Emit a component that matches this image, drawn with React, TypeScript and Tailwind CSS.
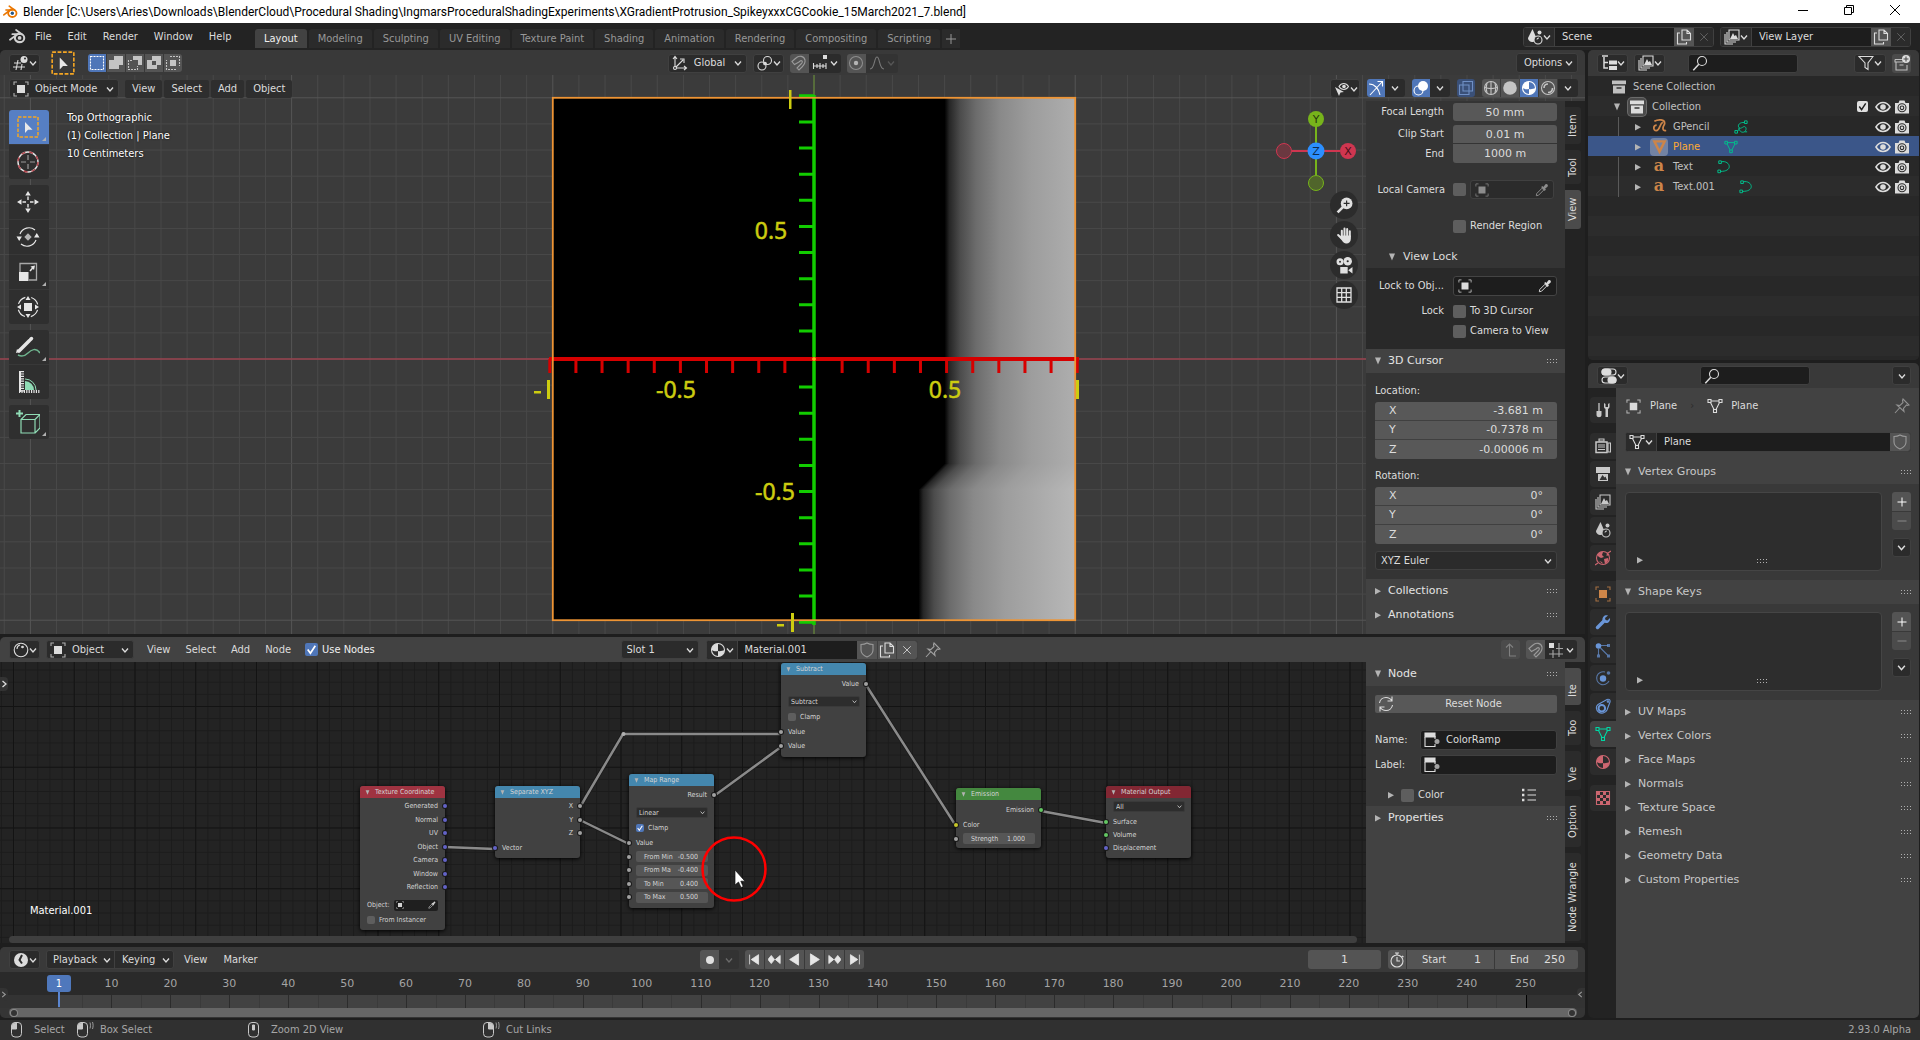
import type { ReactNode } from "react";

/* ---------- icons ---------- */

interface IconProps {
  className?: string;
}

function Svg({ className = "size-4", children }: IconProps & { children: ReactNode }) {
  return (
    <svg
      viewBox="0 0 16 16"
      className={`shrink-0 ${className}`}
      fill="none"
      stroke="currentColor"
      strokeWidth="1.1"
      aria-hidden="true"
    >
      {children}
    </svg>
  );
}

const Chevron = ({ className = "size-2" }: IconProps) => (
  <svg viewBox="0 0 8 8" className={`shrink-0 ${className}`} fill="none" stroke="currentColor" strokeWidth="1.3" aria-hidden="true">
    <path d="M1 2.5 4 6l3-3.500" />
  </svg>
);

const Triangle = ({ open = false, className = "size-2" }: IconProps & { open?: boolean }) => (
  <svg viewBox="0 0 8 8" className={`shrink-0 text-[#b4b4b4] ${className}`} fill="currentColor" aria-hidden="true">
    <path d={open ? "M1 .5h6L4 7.500z" : "M1 1v6.500L7 4.200z"} />
  </svg>
);

const Grip = ({ className = "" }: IconProps) => (
  <svg viewBox="0 0 12 5" className={`h-[5px] w-3 shrink-0 ${className}`} fill="#b0b0b0" aria-hidden="true">
    <path d="M0 0h1v1H0zM3 0h1v1H3zM6 0h1v1H6zM9 0h1v1H9zM0 3h1v1H0zM3 3h1v1H3zM6 3h1v1H6zM9 3h1v1H9z" />
  </svg>
);

const BlenderLogo = ({ className, ring, core }: IconProps & { ring: string; core: string }) => (
  <svg viewBox="0 0 18 16" className={`shrink-0 ${className}`} fill="none" aria-hidden="true">
    <path d="M1 11.500 9.500 5M3.500 5.500H11M7.500 1l6.500 4.800" stroke={ring} strokeWidth="1.900" strokeLinecap="round" />
    <ellipse cx="11.200" cy="9.500" rx="5" ry="4.500" stroke={ring} strokeWidth="2.200" />
    <circle cx="11.200" cy="9.500" r="2" fill={core} />
  </svg>
);

const ViewportIcon = () => (
  <Svg>
    <path d="M1 8h7M0 12h12M5 5 3 15M9 9l-1 6" />
    <circle cx="11" cy="4.500" r="3.500" fill="currentColor" stroke="none" />
    <circle cx="12" cy="3.500" r="1" fill="#2b2b2b" stroke="none" />
  </Svg>
);

const SelectBoxIcon = ({ className }: IconProps) => (
  <svg viewBox="0 0 24 24" className={`shrink-0 ${className}`} fill="none" aria-hidden="true">
    <rect x="2" y="2" width="20" height="20" stroke="#f5a623" strokeWidth="1.500" strokeDasharray="3.500 1.500" />
    <path d="M9 7v11l3-3.300h4.500z" fill="#e8e8e8" />
  </svg>
);

const CursorToolIcon = ({ className }: IconProps) => (
  <svg viewBox="0 0 24 24" className={className} fill="none" aria-hidden="true">
    <circle cx="12" cy="12" r="10" stroke="#e6e6e6" strokeWidth="1.400" />
    <circle cx="12" cy="12" r="10" stroke="#b5474f" strokeWidth="1.500" strokeDasharray="4 4" />
    <path d="M12 5v5M12 14v5M5 12h5M14 12h5" stroke="#9a9a9a" strokeWidth="1.200" />
  </svg>
);

const MoveIcon = ({ className }: IconProps) => (
  <svg viewBox="0 0 24 24" className={className} aria-hidden="true">
    <path d="m12 1 2.800 4.500H9.200zM12 23l2.800-4.500H9.200zM1 12l4.500-2.800v5.600zM23 12l-4.500-2.800v5.600z" fill="#e6e6e6" />
    <path d="M12 6.500V10M12 14v3.500M6.500 12H10M14 12h3.500" stroke="#e6e6e6" strokeWidth="1.400" />
  </svg>
);

const RotateIcon = ({ className }: IconProps) => (
  <svg viewBox="0 0 24 24" className={className} fill="none" aria-hidden="true">
    <path d="M4 9a9.500 9.500 0 0 1 15-4M20 15a9.500 9.500 0 0 1-15 4" stroke="#e6e6e6" strokeWidth="1.200" />
    <path d="m18 12.500 2.800-4.500 2.700 4.500zM.5 11.500h5.400L3.200 16z" fill="#e6e6e6" />
    <path d="m12 8.300 3.700 3.700-3.700 3.700L8.300 12z" fill="#b5b5b5" />
  </svg>
);

const ScaleIcon = ({ className }: IconProps) => (
  <svg viewBox="0 0 24 24" className={className} fill="none" aria-hidden="true">
    <path d="M4 12V3.500h16.500V20H13" stroke="#a8a8a8" strokeWidth="1.300" />
    <path d="M3 12h9.500v9H3z" fill="#e6e6e6" />
    <path d="m14 11 3.500-4" stroke="#e6e6e6" strokeWidth="1.500" />
    <path d="M19 5.500 14.500 6.500l3.500 3.500z" fill="#e6e6e6" />
  </svg>
);

const TransformIcon = ({ className }: IconProps) => (
  <svg viewBox="0 0 24 24" className={className} fill="none" aria-hidden="true">
    <circle cx="12" cy="12" r="10" stroke="#e6e6e6" strokeWidth="1.200" strokeDasharray="9.700 6" strokeDashoffset="-3" />
    <path d="M8 8h8v8H8z" fill="#e6e6e6" />
    <path d="m12 1 2.500 4h-5zM12 23l2.500-4h-5zM1 12l4-2.500v5zM23 12l-4-2.500v5z" fill="#e6e6e6" />
  </svg>
);

const AnnotateIcon = ({ className }: IconProps) => (
  <svg viewBox="0 0 24 24" className={className} fill="none" aria-hidden="true">
    <path d="M3 16 13.500 5.500M14.500 4.500l1-1" stroke="#e6e6e6" strokeWidth="3.500" strokeLinecap="round" />
    <path d="m0 18 1-4 3 3z" fill="#e6e6e6" />
    <path d="M2 20c4 2 7 1 10-2s8-6 12 0" stroke="#6fb58f" strokeWidth="1.400" />
  </svg>
);

const MeasureIcon = ({ className }: IconProps) => (
  <svg viewBox="0 0 24 24" className={className} fill="none" aria-hidden="true">
    <path d="M9 11a9 9 0 0 1 9 9H9z" fill="#8fdcb5" />
    <path d="M9 9a11 11 0 0 1 11 11" stroke="#8fdcb5" />
    <path d="M4 1v21" stroke="#e6e6e6" strokeWidth="2" />
    <path d="M6.500 1v21" stroke="#e6e6e6" strokeWidth="3" strokeDasharray="1.200 1.200" />
    <path d="M3 21.500h21" stroke="#e6e6e6" strokeWidth="3" strokeDasharray="1.200 1.200" />
  </svg>
);

const AddCubeIcon = ({ className }: IconProps) => (
  <svg viewBox="0 0 24 24" className={className} fill="none" aria-hidden="true">
    <path d="M3.500 0v7M0 3.500h7" stroke="#8fdcb5" strokeWidth="2" />
    <path d="M5 9.500h14V23H5zM5 9.500l5-5h14l-5 5M24 4.500V18l-5 5" stroke="#8fdcb5" strokeWidth="1.200" />
  </svg>
);

const ObjectIcon = ({ className }: IconProps) => (
  <Svg className={className}>
    <path d="M1 4V1h3M12 1h3v3M15 12v3h-3M4 15H1v-3" opacity=".75" />
    <path d="M4 4h8v8H4z" fill="currentColor" stroke="none" />
  </Svg>
);

const AxesIcon = () => (
  <Svg>
    <path d="M3 12V2M1 4l2-2.500L5 4M4 13h10M12 11l2.500 2L12 15M4 12l7-7M8 4h4v4" />
    <circle cx="3" cy="13" r="1.500" />
  </Svg>
);

const PivotIcon = () => (
  <Svg>
    <circle cx="10.500" cy="5.500" r="4" />
    <circle cx="5" cy="11" r="4" />
    <circle cx="8" cy="8.500" r="1.300" fill="currentColor" />
  </Svg>
);

const MagnetIcon = () => (
  <Svg>
    <path d="M1 6.500 5 3c3-3 8-2 9 2 .5 3-1 5-3 7l-3 3-2-2 4-4c1-1 2-2 1-3s-2 0-3 1L3.500 9.500z" />
  </Svg>
);

const SnapIncrementIcon = () => (
  <Svg>
    <path d="M1 11h13M1.500 8v6M5 9v4M8 8v6M11 9v4M14 8v6" />
    <path d="M11 0h4v4h-4z" fill="currentColor" stroke="none" />
  </Svg>
);

const CircleDotIcon = () => (
  <Svg>
    <circle cx="8" cy="8" r="6.500" opacity=".6" />
    <circle cx="8" cy="8" r="2.200" fill="currentColor" stroke="none" />
  </Svg>
);

const FalloffIcon = () => (
  <Svg>
    <path d="M1 14c5 0 4-12 7-12s2 12 7 12" />
  </Svg>
);

const SceneIcon = ({ className }: IconProps) => (
  <Svg className={className}>
    <path d="M5.500 0 9 8c0 3-1.500 5-3.500 5S1 11.500 1 9z" fill="currentColor" stroke="none" />
    <circle cx="12.500" cy="3.500" r="2" fill="currentColor" stroke="none" />
    <circle cx="11" cy="11" r="4" fill="#2b2b2b" />
    <path d="M10 10.500c0-1 1-1.500 2-1.500" />
  </Svg>
);

const LayersIcon = ({ className }: IconProps) => (
  <Svg className={className}>
    <path d="M5 1h10v10H5zM3 3v10h9M1 5v10h8" />
    <path d="m6 10 3-6 1.500 3L12 6l2 4z" fill="currentColor" stroke="none" />
  </Svg>
);

const CopyIcon = () => (
  <Svg>
    <path d="M6 1h5l3.500 3.500V11H6zM11 1v3.500h3.500M4 4H1.500v11h9v-2" />
  </Svg>
);

const CloseIcon = ({ className }: IconProps) => (
  <Svg className={className}>
    <path d="m3 3 10 10M13 3 3 13" />
  </Svg>
);

const PinIcon = () => (
  <Svg>
    <path d="m1 15 4.500-5M9 1l6 6-1.500.5-1-.5-3 3.500 .5 3L3 7l3 .5L9 4.500 8.500 2.500z" />
  </Svg>
);

const ShieldIcon = () => (
  <Svg>
    <path d="M8 1c2 1.200 4 1.500 6 1.500V8c0 3-2.500 5.500-6 7-3.500-1.500-6-4-6-7V2.500C4 2.500 6 2.200 8 1z" />
  </Svg>
);

const SearchIcon = () => (
  <Svg>
    <circle cx="10" cy="6" r="4.500" />
    <path d="m6.800 9.300-5.500 6" strokeWidth="1.500" />
  </Svg>
);

const FilterIcon = () => (
  <Svg>
    <path d="M1 1.500h14L10 8v6.500l-3-2V8z" />
  </Svg>
);

const NewCollectionIcon = () => (
  <Svg>
    <path d="M1 4.500h9M2 7v8h11v-5M1 4.500V7h8M5.500 10h4" opacity=".8" />
    <circle cx="12" cy="4" r="4" fill="currentColor" stroke="none" />
    <path d="M12 1.500v5M9.500 4h5" stroke="#4b4b4b" />
  </Svg>
);

const OutlinerIcon = () => (
  <Svg>
    <path d="M1 1h6M3 2v11h4M3 7.500h4" strokeWidth="1.500" />
    <path d="M8 5.500h8v4H8zM8 11h8v4H8z" fill="currentColor" stroke="none" />
  </Svg>
);

const PropertiesIcon = () => (
  <Svg>
    <rect x="1" y="1" width="14" height="6" rx="3" />
    <rect x="1" y="9" width="14" height="6" rx="3" />
    <rect x="1" y="1" width="9" height="6" rx="3" fill="currentColor" />
    <rect x="7" y="9" width="8" height="6" rx="3" fill="currentColor" />
  </Svg>
);

const EyeIcon = () => (
  <Svg>
    <path d="M1 8c3.500-6 10.500-6 14 0-3.500 6-10.500 6-14 0z" strokeWidth="1.600" />
    <circle cx="8" cy="8" r="2.800" fill="currentColor" stroke="none" />
  </Svg>
);

const CameraIcon = () => (
  <Svg>
    <path d="M1 4h3.500l1-2.500h5l1 2.500H15v10.500H1z" fill="currentColor" stroke="none" />
    <circle cx="8" cy="8.800" r="4" stroke="#2b2b2b" />
    <circle cx="8" cy="8.800" r="1.800" stroke="#2b2b2b" />
  </Svg>
);

const CollectionIcon = ({ className }: IconProps) => (
  <Svg className={className}>
    <path d="M1 1.500h14v3.800H1zM2 6.500h12V14.500H2z" fill="currentColor" stroke="none" />
    <path d="M5.500 9h5" stroke="#333" strokeWidth="1.700" />
  </Svg>
);

const MeshDataIcon = ({ className }: IconProps) => (
  <Svg className={className}>
    <path d="M1 1.500h3v3H1zM12 1.500h3v3h-3zM6.500 11.500h3v3h-3zM4 3h8M3.500 4.500l3.500 7M12.500 4.500 9 11.500" />
  </Svg>
);

const CurveDataIcon = ({ className }: IconProps) => (
  <Svg className={className}>
    <path d="M5 2c5-1 9 2 9 5.500S10 13 4.500 13M2 1h3v3H2zM1 11.500h3v3H1z" />
  </Svg>
);

const GPencilDataIcon = ({ className }: IconProps) => (
  <Svg className={className}>
    <path d="M12 1h3v3h-3zM1 12h3v3H1zM12 3C7 2 3 6 6 9c2 2 5-3 7-1 2 2 0 6-3 6s-5-4-4-5M4 13c1-1 2-3 2-4M12 13.500h3" />
  </Svg>
);

const GPencilIcon = ({ className }: IconProps) => (
  <Svg className={className}>
    <path d="M2.500 3.500C7 1 13.500 1.500 13.500 5.500c0 2-1.800 3-1.800 5.500 0 2 1.500 3 3.300 2M11.500 4.500C8 6 8.500 13.500 4.500 13.500 1 13.500 1 7.500 5 7.500" strokeWidth="1.900" />
  </Svg>
);

const MeshObjectIcon = ({ className }: IconProps) => (
  <Svg className={className}>
    <path d="M2.500 2.500h11L8 13.500z" strokeWidth="2.600" />
  </Svg>
);

const ToolIcon = () => (
  <Svg>
    <path d="M4 1v8" strokeWidth="1.300" />
    <path d="M1.500 9h5v4c0 3-5 3-5 0zM9 1v4c0 1 1.500 2 1.500 2v8h2.500V7s1.500-1 1.500-2V1L13 2v3h-2.500V2z" fill="currentColor" stroke="none" />
  </Svg>
);

const RenderIcon = () => (
  <Svg>
    <path d="M1 4h11v10.500H1z" strokeWidth="1.500" />
    <path d="M4 1h5v2H4zM13 5h2.500v9H13zM3 7h7M3 9h7M3 11.500h7" />
  </Svg>
);

const OutputIcon = () => (
  <Svg>
    <path d="M1 1h14v6H1zM3 8h10v7H3z" fill="currentColor" stroke="none" />
    <path d="m4.500 14 3-5 2 2.500 1-1 1.500 3.500z" fill="#333" stroke="none" />
  </Svg>
);

const WorldIcon = () => (
  <Svg>
    <circle cx="8" cy="8" r="6.500" />
    <path d="M2 5c2-3 5-3.500 6-3l-1 3 2 2-3 1-2-1zM9 9l4-1c1 2-1 5-3 6zM12 2l2.500 3-3 1zM4 11l3 1 1 2z" fill="currentColor" stroke="none" />
    <path d="m0 15 3-2M13 3l3-2" />
  </Svg>
);

const WrenchIcon = () => (
  <Svg>
    <path d="M2.500 13.500 9 7" strokeWidth="3.500" strokeLinecap="round" />
    <path d="M13 1.500c-3-1-6 1-5.500 5l3 2.500c3 .5 5-2 4.500-5l-2.500 2.500-2-.5-.5-2z" fill="currentColor" stroke="none" />
  </Svg>
);

const ParticlesIcon = () => (
  <Svg>
    <circle cx="3.500" cy="4" r="2.800" fill="currentColor" stroke="none" />
    <path d="M6 3.500h7M3.500 7v6M5.500 6l7 7" opacity=".7" />
    <path d="M12 2h3v3h-3zM2 12.500h3v3H2zM12 12.500h3v3h-3z" fill="currentColor" stroke="none" opacity=".7" />
  </Svg>
);

const PhysicsIcon = () => (
  <Svg>
    <path d="M10 2a6.500 6.500 0 1 0 4 9" opacity=".7" />
    <circle cx="8" cy="8.500" r="3.200" fill="currentColor" stroke="none" />
    <circle cx="13.500" cy="3" r="1.800" fill="currentColor" stroke="none" opacity=".7" />
  </Svg>
);

const ConstraintIcon = () => (
  <Svg>
    <path d="M3 6.500 12 1.500c2-.8 3.500.5 3 2.500l-3 8c-1.500 3.500-6 4-8.500 2S.5 8.500 3 6.500z" />
    <circle cx="6.800" cy="10.200" r="3.300" strokeWidth="2" />
    <circle cx="13" cy="3.500" r=".8" />
  </Svg>
);

const MaterialIcon = ({ className }: IconProps) => (
  <Svg className={className}>
    <circle cx="8" cy="8" r="6.500" />
    <path d="M8 1.500A6.500 6.500 0 0 0 1.500 8c2.500 1.500 4.500 1.500 6.500 1zM8 9c2 .5 4.500 0 6.500-1A6.500 6.500 0 0 1 8 14.500z" fill="currentColor" stroke="none" />
  </Svg>
);

const TextureIcon = () => (
  <Svg>
    <path d="M1.500 1.500h13v13h-13z" />
    <path
      d="M2 2h3v3H2zM8 2h3v3H8zM5 5h3v3H5zM11 5h3v3h-3zM2 8h3v3H2zM8 8h3v3H8zM5 11h3v3H5zM11 11h3v3h-3z"
      fill="currentColor"
      stroke="none"
    />
  </Svg>
);

const EyedropperIcon = ({ className }: IconProps) => (
  <Svg className={className}>
    <path d="M1.500 14.500 2 12l6-6 2 2-6 6z" />
    <path d="M7 4.500 8.500 3.500 9.500 4.500l2.500-3c1.500-1 3.500 1 2.500 2.500l-3 2.500 1 1L11 9z" fill="currentColor" stroke="none" />
  </Svg>
);

const ShaderIcon = () => (
  <Svg>
    <circle cx="8" cy="8" r="6.800" />
    <path d="M4 7c0-2 1-3.500 3-4" />
    <circle cx="9.500" cy="5" r=".8" fill="currentColor" />
  </Svg>
);

const NodeIcon = () => (
  <Svg>
    <path d="M1 1h10v4H1z" fill="currentColor" />
    <path d="M11 4v3M1 5v9.500h10V12" />
    <circle cx="13" cy="9.500" r="2.500" fill="currentColor" stroke="none" opacity=".7" />
  </Svg>
);

const RefreshIcon = () => (
  <Svg>
    <path d="M1.500 7C2 3.500 5 1.500 8 1.500c2.500 0 4.500 1 6 3.500M14 .5V5H9.500M14.500 9c-.5 3.500-3.500 5.500-6.500 5.500-2.500 0-4.500-1-6-3.500M2 15.500V11h4.500" />
  </Svg>
);

const ListIcon = () => (
  <Svg>
    <path d="M6.500 3H15M6.500 8H15M6.500 13H15" />
    <path d="M1 1.800h2.400v2.400H1zM1 6.800h2.400v2.400H1zM1 11.800h2.400v2.400H1z" fill="currentColor" stroke="none" />
  </Svg>
);

const ClockIcon = () => (
  <Svg>
    <circle cx="8" cy="8" r="7" fill="currentColor" stroke="none" />
    <path d="M9 3 6.500 8 9 11.500" stroke="#2b2b2b" strokeWidth="2" />
  </Svg>
);

const StopwatchIcon = () => (
  <Svg>
    <circle cx="8" cy="9" r="6" />
    <path d="M8 5v4h3M6 1h4M8 1v2M13 4l1.500 1" />
  </Svg>
);

const MouseIcon = ({ side, drag = false }: { side: "left" | "middle" | "right"; drag?: boolean }) => (
  <svg viewBox="0 0 18 18" className="size-[18px] shrink-0" fill="none" stroke="#c8c8c8" aria-hidden="true">
    <rect x="1.500" y="1.500" width="10" height="14.500" rx="3.500" />
    {side === "left" && <path d="M2 8V5c0-2 1.500-3 4.500-3v6z" fill="#c8c8c8" />}
    {side === "middle" && <path d="M5.500 4h2v5h-2z" fill="#c8c8c8" />}
    {side === "right" && <path d="M11 8V5c0-2-1.500-3-4.500-3v6z" fill="#c8c8c8" />}
    {drag && <path d="M14 1.500c.6 2 .6 4 0 6M16.500 1c.8 2.500.8 4.500 0 7" opacity=".7" />}
  </svg>
);

/* ---------- shared controls ---------- */

const dark = "rounded-[3px] border border-[#404040] bg-[#2b2b2b]";

function IconMenu({ label, children, className = "w-[31px]" }: { label: string; children: ReactNode; className?: string }) {
  return (
    <button type="button" aria-label={label} className={`flex h-[19px] items-center justify-between px-[3px] ${dark} ${className}`}>
      {children}
      <Chevron />
    </button>
  );
}

function Dropdown({ label, value, className, small = false }: { label: string; value: string; className: string; small?: boolean }) {
  return (
    <span className={`relative flex items-center ${className}`}>
      <select aria-label={label} className="h-full w-full appearance-none bg-transparent outline-none">
        <option>{value}</option>
      </select>
      <Chevron className={small ? "pointer-events-none absolute right-[2px] size-[5px]" : "pointer-events-none absolute right-1 size-2"} />
    </span>
  );
}

function Check({ label, checked = false, className = "", box = "size-[13px]" }: { label: string; checked?: boolean; className?: string; box?: string }) {
  return (
    <label className={`flex items-center gap-1 whitespace-nowrap ${className}`}>
      <span className={`relative shrink-0 ${box}`}>
        <input
          type="checkbox"
          defaultChecked={checked}
          className="peer block size-full appearance-none rounded-[2px] bg-[#5e5e5e] checked:bg-[#4f76b8]"
        />
        <svg viewBox="0 0 12 12" className="pointer-events-none absolute inset-0 hidden size-full peer-checked:block" fill="none" stroke="#fff" strokeWidth="1.600">
          <path d="m2.500 6 2.500 3.500L9.500 2.500" />
        </svg>
      </span>
      {label}
    </label>
  );
}

function PanelHeader({ title, open = false, dim = false }: { title: string; open?: boolean; dim?: boolean }) {
  return (
    <button
      type="button"
      aria-expanded={open}
      className={`flex h-6 w-full items-center bg-[#424242] pr-[6px] pl-2 text-left font-['DejaVu_Sans',sans-serif] ${dim ? "text-[#c8c8c8]" : "text-[#e4e4e4]"}`}
    >
      <Triangle open={open} />
      <span className="ml-[6px] flex-1">{title}</span>
      <Grip />
    </button>
  );
}

function SideTabs({ tabs }: { tabs: { name: string; active?: boolean; className: string }[] }) {
  return (
    <div className="flex w-5 shrink-0 flex-col gap-[6px] bg-[#232323] pt-[6px]" role="tablist" aria-orientation="vertical">
      {tabs.map((tab) => (
        <button
          key={tab.name}
          type="button"
          role="tab"
          aria-selected={!!tab.active}
          className={`flex w-4 rotate-180 items-center justify-center rounded-l-[3px] whitespace-nowrap [writing-mode:vertical-rl] ${tab.className} ${
            tab.active ? "bg-[#4b4b4b]" : "bg-[#2b2b2b]"
          }`}
        >
          {tab.name}
        </button>
      ))}
    </div>
  );
}

function AxisFields({ name, rows }: { name: string; rows: [string, string][] }) {
  return (
    <fieldset className="flex flex-col divide-y divide-[#404040] overflow-hidden rounded-[3px]">
      {rows.map(([axis, value]) => (
        <label key={axis} className="flex h-[19px] items-center bg-[#585858] pr-[14px] pl-[14px] font-['DejaVu_Sans',sans-serif]">
          {axis}
          <input aria-label={`${name} ${axis}`} defaultValue={value} className="ml-auto w-28 bg-transparent text-right outline-none" />
        </label>
      ))}
    </fieldset>
  );
}

function IdBlock({ label, value, icon, children, className = "w-[119px]" }: { label: string; value: string; icon: ReactNode; children: ReactNode; className?: string }) {
  return (
    <div className="flex h-5 min-w-0 items-stretch overflow-hidden rounded-[3px] border border-[#404040] bg-[#1d1d1d]">
      <button type="button" aria-label={`Browse ${label}`} className="flex w-[31px] shrink-0 items-center justify-between border-r border-[#404040] bg-[#2b2b2b] px-[3px]">
        {icon}
        <Chevron />
      </button>
      <input aria-label={label} defaultValue={value} className={`min-w-0 bg-transparent px-[7px] outline-none ${className}`} />
      {children}
    </div>
  );
}

const idButton = "flex w-5 shrink-0 items-center justify-center bg-[#545454]";

/* ---------- title bar and top bar ---------- */

const workspaces = [
  "Layout",
  "Modeling",
  "Sculpting",
  "UV Editing",
  "Texture Paint",
  "Shading",
  "Animation",
  "Rendering",
  "Compositing",
  "Scripting",
];

function TitleBar() {
  return (
    <div className="flex h-[23px] items-center bg-white pl-[3px] text-black">
      <BlenderLogo className="h-[14px] w-[15px]" ring="#ea7600" core="#265787" />
      <span className="ml-[5px] flex-1 font-['Roboto',sans-serif] text-[12px] whitespace-nowrap">
        Blender [C:\Users\Aries\Downloads\BlenderCloud\Procedural Shading\IngmarsProceduralShadingExperiments\XGradientProtrusion_SpikeyxxxCGCookie_15March2021_7.blend]
      </span>
      <div className="flex pr-[2px] pb-[3px]">
        <button type="button" aria-label="Minimize" className="flex w-[46px] justify-center">
          <svg viewBox="0 0 10 10" className="size-[10px]" stroke="#000"><path d="M0 5.500h10" /></svg>
        </button>
        <button type="button" aria-label="Restore" className="flex w-[46px] justify-center">
          <svg viewBox="0 0 10 10" className="size-[10px]" fill="none" stroke="#000"><path d="M.5 2.500h7v7h-7zM2.500 2.500v-2h7v7h-2" /></svg>
        </button>
        <button type="button" aria-label="Close" className="flex w-[46px] justify-center">
          <svg viewBox="0 0 10 10" className="size-[10px]" stroke="#000"><path d="m0 0 10 10M10 0 0 10" /></svg>
        </button>
      </div>
    </div>
  );
}

function TopBar() {
  return (
    <div className="flex h-[27px] items-center bg-[#232323] pr-[9px] pl-[9px]">
      <BlenderLogo className="h-[15px] w-[17px]" ring="#d0d0d0" core="#d0d0d0" />
      <nav className="ml-[9px] flex w-[220px] gap-4">
        {["File", "Edit", "Render", "Window", "Help"].map((item) => (
          <button key={item} type="button">{item}</button>
        ))}
      </nav>
      <div className="flex gap-[2px] self-end pb-[2px]" role="tablist">
        {workspaces.map((name, i) => (
          <button
            key={name}
            type="button"
            role="tab"
            aria-selected={i === 0}
            className={`h-[19px] rounded-t-[3px] px-[9px] whitespace-nowrap ${i === 0 ? "bg-[#424242] text-[#f0f0f0]" : "bg-[#2b2b2b] text-[#989898]"}`}
          >
            {name}
          </button>
        ))}
        <button type="button" aria-label="Add workspace" className="flex h-[19px] w-[18px] items-center justify-center bg-[#2b2b2b] text-[#989898]">
          <svg viewBox="0 0 10 10" className="size-[10px]" stroke="currentColor"><path d="M5 0v10M0 5h10" /></svg>
        </button>
      </div>
      <div className="ml-auto flex gap-[6px]">
        <IdBlock label="Scene" value="Scene" icon={<SceneIcon />}>
          <button type="button" aria-label="New scene" className={idButton}><CopyIcon /></button>
          <button type="button" aria-label="Delete scene" className="flex w-[19px] items-center justify-center bg-[#2b2b2b] text-[#6a6a6a]"><CloseIcon className="size-3" /></button>
        </IdBlock>
        <IdBlock label="View layer" value="View Layer" icon={<LayersIcon />}>
          <button type="button" aria-label="New view layer" className={idButton}><CopyIcon /></button>
          <button type="button" aria-label="Remove view layer" className="flex w-[19px] items-center justify-center bg-[#2b2b2b] text-[#6a6a6a]"><CloseIcon className="size-3" /></button>
        </IdBlock>
      </div>
    </div>
  );
}

/* ---------- 3D viewport ---------- */

const CX = 814;
const CY = 284;
const STEP = 26.12;
const tens = Array.from({ length: 10 }, (_, i) => i + 1);
const gridX = Array.from({ length: 61 }, (_, i) => i - 31);
const gridY = Array.from({ length: 21 }, (_, i) => i - 10);

function SceneDrawing() {
  const left = CX - STEP * 10;
  const top = CY - STEP * 10;
  const size = STEP * 20;
  const bandTop = Math.round(CY + STEP * 4);

  return (
    <svg viewBox="0 0 1585 559" preserveAspectRatio="xMidYMid slice" className="absolute inset-0 size-full" aria-hidden="true">
      <defs>
        <linearGradient id="ramp" gradientUnits="userSpaceOnUse" x1="0" x2="157" y1="0" y2="0">
          <stop offset="0" stopColor="#000" />
          <stop offset=".03" stopColor="#262626" />
          <stop offset=".1" stopColor="#4c4c4c" />
          <stop offset=".2" stopColor="#6c6c6c" />
          <stop offset=".35" stopColor="#898989" />
          <stop offset=".55" stopColor="#9d9d9d" />
          <stop offset=".83" stopColor="#aeaeae" />
          <stop offset="1" stopColor="#b8b8b8" />
        </linearGradient>
        <clipPath id="plane">
          <rect x={left} y={top} width={size} height={size} />
        </clipPath>
      </defs>

      {gridX.map((n) => (
        <path key={n} d={`M${CX + n * STEP} 0v559`} stroke={n % 10 === 0 ? "#565656" : "#494949"} />
      ))}
      {gridY.map((n) => (
        <path key={n} d={`M0 ${CY + n * STEP}h1585`} stroke={n % 10 === 0 ? "#565656" : "#494949"} />
      ))}
      <path d={`M0 ${CY}h1585`} stroke="#97404c" strokeWidth="1.500" />
      <path d={`M${CX} 0v559`} stroke="#648f2e" />

      <g clipPath="url(#plane)">
        <rect x={left} y={top} width={size} height={size} fill="#000" />
        <rect width="160" height={bandTop + 1} fill="url(#ramp)" transform={`translate(${CX + STEP * 5} 0)`} />
        {Array.from({ length: 26 }, (_, i) => (
          <rect key={i} width="160" height="2" fill="url(#ramp)" transform={`translate(${CX + STEP * 5 - i} ${bandTop + i})`} />
        ))}
        <rect width="160" height="140" fill="url(#ramp)" transform={`translate(${CX + STEP * 4} ${bandTop + 26})`} />
      </g>

      <path d={`M${CX} ${CY - 264}V${CY + 266}`} stroke="#12cc00" strokeWidth="3.500" />
      {tens.map((n) => (
        <path key={n} d={`M${CX - 15} ${CY - 2 - n * STEP}h15M${CX - 15} ${CY + 2 + n * STEP}h15`} stroke="#12cc00" strokeWidth="3" />
      ))}
      <path d={`M${CX - 265} ${CY}H${CX + 265}`} stroke="#d60000" strokeWidth="4" />
      {tens.map((n) => (
        <path key={n} d={`M${CX - 3 - n * STEP} ${CY}v14M${CX + 2 + n * STEP} ${CY}v14`} stroke="#d60000" strokeWidth="3" />
      ))}
      <rect x={left} y={top} width={size} height={size} fill="none" stroke="#ee9434" strokeWidth="1.800" />
      <circle cx={CX} cy={CY} r="2" fill="#ffa01e" />

      <g fill="#cccc10">
        <path d="M789 15h2.500v19H789zM534 316h7v2.500h-7zM547 305h3v19h-3zM1076 305h3v19h-3zM777 549h7v2.500h-7zM791 538h3v19h-3z" />
        <g fontFamily="'Noto Sans', sans-serif" fontSize="23" textAnchor="middle" stroke="#cccc10" strokeWidth=".5">
          <text x="771" y="164">0.5</text>
          <text x="676" y="323">-0.5</text>
          <text x="945" y="323">0.5</text>
          <text x="775" y="425">-0.5</text>
        </g>
      </g>
    </svg>
  );
}

function ToolHeader() {
  return (
    <div className="grid h-[25px] grid-cols-[42%_auto_1fr] items-center rounded-t-[5px] bg-[#393939] pr-[7px]">
      <div className="flex items-center pl-[9px]">
        <IconMenu label="Editor type"><ViewportIcon /></IconMenu>
        <SelectBoxIcon className="ml-[10px] size-[26px]" />
        <div className="ml-3 flex gap-px overflow-hidden rounded-[3px]">
          <button type="button" aria-label="Set" className="flex h-[18px] w-[18px] items-center justify-center bg-[#4f76b8] text-white">
            <Svg><path d="M1.500 1.500h13v13h-13z" strokeDasharray="2 1" /></Svg>
          </button>
          <button type="button" aria-label="Extend" className="flex h-[18px] w-[18px] items-center justify-center bg-[#545454] text-[#c4c4c4]">
            <Svg><path d="M6 1h9v9h-4v4H1V5h5z" fill="currentColor" stroke="none" /></Svg>
          </button>
          <button type="button" aria-label="Subtract" className="flex h-[18px] w-[18px] items-center justify-center bg-[#545454] text-[#c4c4c4]">
            <Svg><path d="M6 1h9v9h-4V5H6z" fill="currentColor" stroke="none" /><path d="M5 5.500H1.500v9h9V11" strokeDasharray="2 1" /></Svg>
          </button>
          <button type="button" aria-label="Invert" className="flex h-[18px] w-[18px] items-center justify-center bg-[#545454] text-[#c4c4c4]">
            <Svg><path d="M6 1h9v9h-4v4H1V5h5zM6 6v4h4V6z" fill="currentColor" fillRule="evenodd" stroke="none" /></Svg>
          </button>
          <button type="button" aria-label="Intersect" className="flex h-[18px] w-[18px] items-center justify-center bg-[#545454] text-[#c4c4c4]">
            <Svg><path d="M5 5h6v6H5z" fill="currentColor" stroke="none" /><path d="M5 1.500h9.500V11M11 14.500H1.500V5" strokeDasharray="2 1" /></Svg>
          </button>
        </div>
      </div>
      <div className="flex items-center gap-[6px] pl-[5px]">
        <div className={`flex h-[19px] items-center pl-[3px] ${dark}`}>
          <AxesIcon />
          <Dropdown label="Transform orientation" value="Global" className="w-[58px] [&>select]:pl-[6px]" />
        </div>
        <IconMenu label="Pivot point"><PivotIcon /></IconMenu>
        <div className="flex h-[19px] overflow-hidden rounded-[3px]">
          <button type="button" aria-label="Snap" className="flex w-[19px] items-center justify-center bg-[#545454] text-[#9a9a9a]"><MagnetIcon /></button>
          <button type="button" aria-label="Snap to" className="flex w-8 items-center justify-between bg-[#2b2b2b] px-[3px]"><SnapIncrementIcon /><Chevron /></button>
        </div>
        <div className="flex h-[19px] overflow-hidden rounded-[3px]">
          <button type="button" aria-label="Proportional editing" className="flex w-[19px] items-center justify-center bg-[#545454] text-[#b4b4b4]"><CircleDotIcon /></button>
          <button type="button" aria-label="Falloff" className="flex w-8 items-center justify-between bg-[#333] px-[3px] text-[#7a7a7a]"><FalloffIcon /><Chevron className="size-2 opacity-50" /></button>
        </div>
      </div>
      <button type="button" className={`ml-auto flex h-5 w-[62px] items-center justify-between pr-1 pl-[7px] ${dark}`}>
        Options
        <Chevron />
      </button>
    </div>
  );
}

const toolGroups = [
  [
    { name: "Select Box", Icon: SelectBoxIcon, active: true, more: true },
    { name: "Cursor", Icon: CursorToolIcon },
  ],
  [
    { name: "Move", Icon: MoveIcon },
    { name: "Rotate", Icon: RotateIcon },
    { name: "Scale", Icon: ScaleIcon, more: true },
    { name: "Transform", Icon: TransformIcon },
  ],
  [
    { name: "Annotate", Icon: AnnotateIcon, more: true },
    { name: "Measure", Icon: MeasureIcon },
  ],
  [{ name: "Add Cube", Icon: AddCubeIcon, more: true }],
];

function Toolbar() {
  return (
    <div className="flex flex-col gap-[6px] pl-[9px]">
      {toolGroups.map((group) => (
        <div key={group[0].name} className="flex flex-col gap-px overflow-hidden rounded-[3px] bg-[#383838]">
          {group.map(({ name, Icon, active, more }: { name: string; Icon: (p: IconProps) => ReactNode; active?: boolean; more?: boolean }) => (
            <button
              key={name}
              type="button"
              aria-label={name}
              className={`relative flex h-[34px] w-10 items-center justify-center pr-[2px] ${active ? "bg-[#567fc4]" : "bg-[#2f2f2f]"}`}
            >
              <Icon className="size-6" />
              {more && (
                <svg viewBox="0 0 4 4" className="absolute right-[3px] bottom-[3px] size-1" fill="#b0b0b0"><path d="M4 0v4H0z" /></svg>
              )}
            </button>
          ))}
        </div>
      ))}
    </div>
  );
}

function NavGizmo() {
  return (
    <div className="flex flex-col items-end">
      <svg viewBox="0 0 84 84" className="size-[84px]" aria-hidden="true">
        <path d="M42 10v24M42 50v16" stroke="#77b41b" strokeWidth="2" />
        <path d="M18 42h16M50 42h16" stroke="#cf3650" strokeWidth="2" />
        <circle cx="10" cy="42" r="7.500" fill="#6b3840" stroke="#cf3650" />
        <circle cx="42" cy="74" r="7.500" fill="#50652b" stroke="#77b41b" />
        <circle cx="42" cy="10" r="8" fill="#77b41b" />
        <circle cx="74" cy="42" r="8" fill="#cf3650" />
        <circle cx="42" cy="42" r="8.500" fill="#2c8fff" />
        <g fontFamily="'DejaVu Sans', sans-serif" fontSize="11" textAnchor="middle">
          <text x="42" y="14" fill="#26380c">Y</text>
          <text x="74" y="46" fill="#450f18">X</text>
          <text x="42" y="46" fill="#0d2c4d">Z</text>
        </g>
      </svg>
      <div className="mt-[-2px] flex flex-col gap-[2px] text-[#e0e0e0]">
        <button type="button" aria-label="Zoom" className="flex size-7 items-center justify-center rounded-full bg-[#2c2c2c]">
          <Svg className="size-[17px]">
            <circle cx="10" cy="6" r="5.500" fill="currentColor" stroke="none" />
            <path d="m6.500 9.500-5 5" strokeWidth="2.500" />
            <path d="M10 3.200v5.600M7.200 6h5.600" stroke="#2c2c2c" />
          </Svg>
        </button>
        <button type="button" aria-label="Pan" className="flex size-7 items-center justify-center rounded-full bg-[#2c2c2c]">
          <Svg className="size-[17px]">
            <path d="M5.500 9V3.500M8 8V1.500M10.500 8V2M13 9V4M5.500 11 2 7.500" strokeWidth="1.900" strokeLinecap="round" />
            <path d="M4.500 8H14v3c0 3-2 4.500-4 4.500S6.500 14.500 4 10z" fill="currentColor" stroke="none" />
          </Svg>
        </button>
        <button type="button" aria-label="Camera view" className="flex size-7 items-center justify-center rounded-full bg-[#2c2c2c]">
          <Svg className="size-[17px]">
            <circle cx="3.800" cy="4.500" r="3.300" fill="currentColor" stroke="none" />
            <circle cx="11" cy="4" r="4" fill="currentColor" stroke="none" />
            <circle cx="3.800" cy="4.500" r=".9" fill="#2c2c2c" stroke="none" />
            <circle cx="11" cy="4" r="1" fill="#2c2c2c" stroke="none" />
            <path d="M4 9.500h7v6H4zM11.500 12.500l4-3v6z" fill="currentColor" stroke="none" />
          </Svg>
        </button>
        <button type="button" aria-label="Orthographic" className="flex size-7 items-center justify-center rounded-full bg-[#2c2c2c]">
          <Svg><path d="M1 1h14v14H1zM5.700 1v14M10.300 1v14M1 5.700h14M1 10.300h14" strokeWidth="1.300" /></Svg>
        </button>
      </div>
    </div>
  );
}

const numberField = "min-w-0 bg-[#585858] text-center font-['DejaVu_Sans',sans-serif] outline-none";

function ViewPanel() {
  return (
    <div className="flex w-[199px] shrink-0 flex-col bg-[#343434]">
      <div className="grid grid-cols-[78px_104px] gap-x-[9px] pt-[2px] text-right">
        <label htmlFor="focal" className="leading-[18px]">Focal Length</label>
        <input id="focal" defaultValue="50 mm" className={`h-[18px] rounded-[3px] ${numberField}`} />
        <label htmlFor="clip-start" className="mt-1 leading-[18px]">Clip Start</label>
        <input id="clip-start" defaultValue="0.01 m" className={`mt-1 h-[18px] rounded-t-[3px] ${numberField}`} />
        <label htmlFor="clip-end" className="mt-px leading-[19px]">End</label>
        <input id="clip-end" defaultValue="1000 m" className={`mt-px h-[19px] rounded-b-[3px] ${numberField}`} />
      </div>
      <div className="mt-[17px] flex h-[19px] items-center pl-2">
        <label htmlFor="local-cam" className="w-[71px] text-right">Local Camera</label>
        <span className="ml-2"><Check label="" /></span>
        <span className={`ml-1 flex h-[19px] w-[84px] items-center px-1 text-[#8c8c8c] ${dark}`}>
          <ObjectIcon className="size-[14px]" />
          <input id="local-cam" className="w-0 flex-1 bg-transparent outline-none" />
          <EyedropperIcon className="size-[14px]" />
        </span>
      </div>
      <Check label="Render Region" className="mt-[17px] h-5 pl-[87px]" />
      <button type="button" className="mt-[10px] flex h-[22px] items-center gap-[7px] pl-[22px] font-['DejaVu_Sans',sans-serif]">
        <Triangle open />
        View Lock
      </button>
      <div className="flex h-[81px] flex-col bg-[#292929] pt-2">
        <div className="flex items-center gap-[9px]">
          <label htmlFor="lock-obj" className="w-[78px] text-right">Lock to Obj...</label>
          <span className="flex h-[20px] w-[104px] items-center rounded-[3px] border border-[#444] bg-[#1d1d1d] px-1">
            <ObjectIcon className="size-[14px]" />
            <input id="lock-obj" className="w-0 flex-1 bg-transparent outline-none" />
            <EyedropperIcon className="size-[14px]" />
          </span>
        </div>
        <div className="mt-[5px] flex h-5 items-center gap-[9px]">
          <span className="w-[78px] text-right">Lock</span>
          <Check label="To 3D Cursor" />
        </div>
        <Check label="Camera to View" className="h-5 pl-[87px]" />
      </div>
      <PanelHeader title="3D Cursor" open />
      <div className="flex flex-col pt-2 pr-2 pb-2 pl-[9px]">
        <span className="h-[21px] leading-5">Location:</span>
        <AxisFields name="Location" rows={[["X", "-3.681 m"], ["Y", "-0.7378 m"], ["Z", "-0.00006 m"]]} />
        <span className="mt-[7px] h-[21px] leading-5">Rotation:</span>
        <AxisFields name="Rotation" rows={[["X", "0°"], ["Y", "0°"], ["Z", "0°"]]} />
        <Dropdown label="Rotation mode" value="XYZ Euler" className={`mt-[7px] mb-px h-[19px] [&>select]:pl-[5px] ${dark}`} />
      </div>
      <PanelHeader title="Collections" />
      <div className="flex-1 bg-[#424242]">
        <PanelHeader title="Annotations" />
      </div>
    </div>
  );
}

function ViewportHeader() {
  const blue = "flex w-[18px] items-center justify-center bg-[#4f76b8] text-white";
  const grey = "flex w-[18px] items-center justify-center bg-[#545454] text-[#c4c4c4]";
  const drop = "flex w-5 items-center justify-center bg-[#2b2b2b]";
  return (
    <div className="flex h-[26px] items-center pt-px pr-[7px] pl-[9px]">
      <div className={`flex h-[19px] items-center pl-[3px] ${dark}`}>
        <ObjectIcon />
        <Dropdown label="Mode" value="Object Mode" className="w-[89px] [&>select]:pl-[6px]" />
      </div>
      <div className="ml-[6px] flex gap-[2px]">
        {["View", "Select", "Add", "Object"].map((item) => (
          <button key={item} type="button" className="h-[18px] rounded-[2px] bg-[#2e2e2e] px-[7px]">{item}</button>
        ))}
      </div>
      <div className="ml-auto flex gap-[7px]">
        <IconMenu label="Object visibility" className="w-[30px]">
          <Svg>
            <path d="M1 6l4 9 1.500-3.500 3.500-.5z" fill="currentColor" stroke="none" />
            <path d="M5 5.500c2.500-4 7-4 9.500 0-2.500 4-7 4-9.500 0z" />
            <circle cx="10" cy="5.500" r="1.800" fill="currentColor" stroke="none" />
          </Svg>
        </IconMenu>
        <div className="flex h-[18px] overflow-hidden rounded-[3px]">
          <button type="button" aria-label="Gizmos" className={blue}>
            <Svg><path d="M2 15 14 2M9.500 1.500H14.500V6.500M1 4c6 0 10 5 11 11" /></Svg>
          </button>
          <button type="button" aria-label="Gizmo options" className={drop}><Chevron /></button>
        </div>
        <div className="flex h-[18px] overflow-hidden rounded-[3px]">
          <button type="button" aria-label="Overlays" className={blue}>
            <Svg><circle cx="10" cy="6" r="5" fill="currentColor" stroke="none" /><circle cx="5.500" cy="10.500" r="4.500" /></Svg>
          </button>
          <button type="button" aria-label="Overlay options" className={drop}><Chevron /></button>
        </div>
        <button type="button" aria-label="X-ray" className="flex size-[18px] items-center justify-center rounded-[3px] bg-[#3a5078] text-[#6f8fc4]">
          <Svg><path d="M5 1.500h9.500V11H5z" /><path d="M1.500 5h9.500v9.500H1.500z" /></Svg>
        </button>
        <div className="flex h-[18px] gap-px overflow-hidden rounded-[3px]">
          <button type="button" aria-label="Wireframe" className={grey}>
            <Svg><circle cx="8" cy="8" r="6.500" /><path d="M1.500 7c4 2 9 2 13 0M8 1.500v13M4 3c-1 3-1 7 0 10M12 3c1 3 1 7 0 10" /></Svg>
          </button>
          <button type="button" aria-label="Solid" className={grey}>
            <Svg><circle cx="8" cy="8" r="6.800" fill="currentColor" stroke="none" /></Svg>
          </button>
          <button type="button" aria-label="Material preview" className={blue}><MaterialIcon /></button>
          <button type="button" aria-label="Rendered" className={grey}>
            <Svg><circle cx="8" cy="8" r="6.500" /><path d="M4 8c0-2.500 1.500-4 4-4M12.500 8c0 3-2 4.500-4.500 4.500" strokeWidth="1.600" /></Svg>
          </button>
          <button type="button" aria-label="Shading options" className={drop}><Chevron /></button>
        </div>
      </div>
    </div>
  );
}

function Viewport() {
  return (
    <section className="flex flex-1 flex-col" aria-label="3D viewport">
      <ToolHeader />
      <div className="relative flex min-h-[559px] flex-1 flex-col overflow-hidden bg-[#3b3b3b]">
        <SceneDrawing />
        <div className="relative flex flex-1 flex-col">
          <ViewportHeader />
          <div className="flex flex-1">
            <div className="pt-[9px]"><Toolbar /></div>
            <div className="flex-1 pt-2 pl-[18px] leading-[18px] text-white [text-shadow:0_0_2px_#000]">
              <p>Top Orthographic</p>
              <p>(1) Collection | Plane</p>
              <p>10 Centimeters</p>
            </div>
            <div className="pt-2 pr-2"><NavGizmo /></div>
            <ViewPanel />
            <SideTabs
              tabs={[
                { name: "Item", className: "h-[37px]" },
                { name: "Tool", className: "h-[34px]" },
                { name: "View", className: "h-[39px]", active: true },
              ]}
            />
          </div>
        </div>
      </div>
    </section>
  );
}

/* ---------- shader editor ---------- */

const socketColors = {
  vector: "bg-[#6363c7]",
  value: "bg-[#a1a1a1]",
  color: "bg-[#c7c729]",
  shader: "bg-[#63c763]",
};

type SocketKind = keyof typeof socketColors;

function Output({ name, kind = "value" }: { name: string; kind?: SocketKind }) {
  return (
    <div className="relative flex h-3 items-center justify-end pr-[7px]">
      {name}
      <span className={`absolute -right-[2px] size-1 rounded-full ring-1 ring-[#1a1a1a] ${socketColors[kind]}`} />
    </div>
  );
}

function Input({ name, value, kind = "value" }: { name: string; value?: string; kind?: SocketKind }) {
  return (
    <div className={`relative flex items-center pl-[7px] ${value ? "h-[11px]" : "h-3"}`}>
      <span className={`absolute -left-[2px] size-1 rounded-full ring-1 ring-[#1a1a1a] ${socketColors[kind]}`} />
      {value ? (
        <label className="mr-[6px] flex h-[11px] flex-1 items-center rounded-[2px] bg-[#565656] pr-[10px] pl-2 whitespace-nowrap">
          {name}
          <input defaultValue={value} className="w-0 flex-1 bg-transparent text-right outline-none" />
        </label>
      ) : (
        name
      )}
    </div>
  );
}

function NodeCard({ title, header, className, children }: { title: string; header: string; className: string; children: ReactNode }) {
  return (
    <article className={`absolute flex w-[85px] flex-col rounded-[3px] bg-[#414141] text-[7px] leading-[10px] text-[#d4d4d4] shadow-[0_1px_4px_#000] ${className}`}>
      <h3 className={`flex h-3 items-center gap-[5px] rounded-t-[3px] pl-[5px] ${header}`}>
        <Triangle open className="size-[5px]" />
        {title}
      </h3>
      {children}
    </article>
  );
}

const nodeSelect = "ml-[7px] mr-[6px] h-[11px] rounded-[2px] border border-[#3a3a3a] bg-[#2d2d2d] [&>select]:pl-[2px]";

function NodeCanvas() {
  return (
    <div className="relative min-w-0 flex-1 overflow-hidden bg-[#232323]">
      <svg className="absolute inset-0 size-full" aria-hidden="true">
        <defs>
          <pattern id="minor" width="12.150" height="12.150" patternUnits="userSpaceOnUse" x="13" y="44">
            <path d="M.5 0v12.150M0 .5h12.150" stroke="#1b1b1b" />
          </pattern>
          <pattern id="major" width="60.750" height="60.750" patternUnits="userSpaceOnUse" x="13" y="44">
            <path d="M.5 0v60.750M0 .5h60.750" stroke="#131313" />
          </pattern>
        </defs>
        <rect width="100%" height="100%" fill="url(#minor)" />
        <rect width="100%" height="100%" fill="url(#major)" />
        <g fill="none" stroke="#1a1a1a" strokeWidth="4">
          <path d="M445 185 495 187M580 145 623 72H781M580 158l49 24M714 134l67-49M866 23l90 141M1041 149l65 12" />
        </g>
        <g fill="none" stroke="#8a8a8a" strokeWidth="2.500">
          <path d="M445 185 495 187M580 145 623 72H781M580 158l49 24M714 134l67-49M866 23l90 141M1041 149l65 12" />
        </g>
        <circle cx="623.500" cy="72" r="2" fill="#b0b0b0" />
      </svg>

      <button type="button" aria-label="Show toolbar" className="absolute top-[15px] left-0 flex h-[14px] w-2 items-center justify-center rounded-r bg-[#333]">
        <Chevron className="size-2 -rotate-90" />
      </button>

      <NodeCard title="Texture Coordinate" header="bg-[#a03341]" className="top-[124px] left-[360px] h-36">
        <div className="mt-[2px] flex h-[93px] flex-col justify-between">
          {["Generated", "Normal", "UV", "Object", "Camera", "Window", "Reflection"].map((name) => (
            <Output key={name} name={name} kind="vector" />
          ))}
        </div>
        <label className="mt-[7px] flex h-[10px] items-center gap-1 pr-[7px] pl-[7px]">
          Object:
          <span className="flex h-[11px] flex-1 items-center rounded-[2px] bg-[#1f1f1f] px-[2px]">
            <ObjectIcon className="size-2" />
            <input className="w-0 flex-1 bg-transparent outline-none" />
            <EyedropperIcon className="size-2" />
          </span>
        </label>
        <Check label="From Instancer" box="size-2" className="mt-[5px] h-[10px] pl-[7px]" />
      </NodeCard>

      <NodeCard title="Separate XYZ" header="bg-[#4487ae]" className="top-[124px] left-[495px] h-[72px]">
        <div className="mt-[2px] mb-[3px] flex h-[39px] flex-col justify-between">
          <Output name="X" />
          <Output name="Y" />
          <Output name="Z" />
        </div>
        <Input name="Vector" kind="vector" />
      </NodeCard>

      <NodeCard title="Map Range" header="bg-[#4487ae]" className="top-[112px] left-[629px] h-[134px]">
        <div className="mt-[3px] mb-[6px]"><Output name="Result" /></div>
        <Dropdown small label="Interpolation" value="Linear" className={nodeSelect} />
        <Check label="Clamp" checked box="size-2" className="mt-1 mb-[3px] h-3 pl-[7px]" />
        <Input name="Value" />
        <div className="mt-[2px] flex h-[52px] flex-col justify-between">
          <Input name="From Min" value="-0.500" />
          <Input name="From Ma" value="-0.400" />
          <Input name="To Min" value="0.400" />
          <Input name="To Max" value="0.500" />
        </div>
      </NodeCard>

      <NodeCard title="Subtract" header="bg-[#4487ae]" className="top-px left-[781px] h-[94px]">
        <div className="mt-[3px] mb-[6px]"><Output name="Value" /></div>
        <Dropdown small label="Operation" value="Subtract" className={nodeSelect} />
        <Check label="Clamp" box="size-2" className="mt-1 mb-[3px] h-3 pl-[7px]" />
        <div className="flex flex-col gap-[2px]">
          <Input name="Value" />
          <Input name="Value" />
        </div>
      </NodeCard>

      <NodeCard title="Emission" header="bg-[#44883f]" className="top-[126px] left-[956px] h-[60px]">
        <div className="mt-1 mb-[3px]"><Output name="Emission" kind="shader" /></div>
        <Input name="Color" kind="color" />
        <div className="mt-[2px]"><Input name="Strength" value="1.000" /></div>
      </NodeCard>

      <NodeCard title="Material Output" header="bg-[#822733]" className="top-[124px] left-[1106px] h-[72px]">
        <Dropdown small label="Target" value="All" className={`mt-[3px] mb-1 ${nodeSelect}`} />
        <div className="flex flex-col gap-px">
          <Input name="Surface" kind="shader" />
          <Input name="Volume" kind="shader" />
          <Input name="Displacement" kind="vector" />
        </div>
      </NodeCard>

      <span className="absolute top-[241px] left-[30px] leading-4 text-white">Material.001</span>
      <div className="absolute right-[9px] bottom-0 left-[9px] h-[7px] rounded-full bg-[#3f3f3f]" />

      <svg viewBox="0 0 68 68" className="absolute top-[173px] left-[700px] size-[68px]" aria-hidden="true">
        <circle cx="34" cy="34" r="31.500" fill="none" stroke="#f00" strokeWidth="2.500" />
        <path d="M35 35v15l3.500-3 2.500 5.500 2.200-1-2.400-5.300H45z" fill="#fff" stroke="#111" strokeWidth=".7" />
      </svg>
    </div>
  );
}

function ShaderEditor() {
  return (
    <section className="overflow-hidden rounded-t-[5px]" aria-label="Shader editor">
      <div className="grid h-[25px] grid-cols-[39%_auto_1fr] items-center bg-[#424242] pr-2 pl-[9px]">
        <div className="flex items-center">
          <IconMenu label="Editor type"><ShaderIcon /></IconMenu>
          <div className={`ml-[6px] flex h-[19px] items-center pl-[3px] ${dark}`}>
            <ObjectIcon />
            <Dropdown label="Shader type" value="Object" className="w-[67px] [&>select]:pl-[6px]" />
          </div>
          <div className="mr-[14px] ml-[13px] flex gap-[15px]">
            {["View", "Select", "Add", "Node"].map((item) => (
              <button key={item} type="button">{item}</button>
            ))}
          </div>
          <Check label="Use Nodes" checked className="text-[#f0f0f0]" />
        </div>
        <div className="flex items-center gap-[7px]">
          <Dropdown label="Slot" value="Slot 1" className={`h-[19px] w-[78px] [&>select]:pl-[5px] ${dark}`} />
          <IdBlock label="Material" value="Material.001" icon={<MaterialIcon />}>
            <button type="button" aria-label="Fake user" className={`${idButton} text-[#9a9a9a]`}><ShieldIcon /></button>
            <button type="button" aria-label="New material" className={`${idButton} border-x border-[#404040]`}><CopyIcon /></button>
            <button type="button" aria-label="Unlink material" className={idButton}><CloseIcon className="size-3" /></button>
          </IdBlock>
          <button type="button" aria-label="Pin" className="text-[#a0a0a0]"><PinIcon /></button>
        </div>
        <div className="ml-auto flex gap-[6px]">
          <button type="button" aria-label="Parent node tree" className="flex size-[19px] items-center justify-center rounded-[3px] bg-[#4b4b4b] text-[#808080]">
            <Svg><path d="M3 5.500 6.500 2 10 5.500M6.500 2v12H13" /></Svg>
          </button>
          <div className="flex h-[19px] overflow-hidden rounded-[3px]">
            <button type="button" aria-label="Snap" className="flex w-[19px] items-center justify-center bg-[#545454] text-[#9a9a9a]"><MagnetIcon /></button>
            <button type="button" aria-label="Snap target" className="flex w-8 items-center justify-between bg-[#2b2b2b] px-[3px]">
              <Svg><path d="M8 6.500h7M1 12h14M5 8v8M11 1v14" opacity=".7" /><path d="M1 1h5v5H1z" fill="currentColor" stroke="none" /></Svg>
              <Chevron />
            </button>
          </div>
        </div>
      </div>
      <div className="flex h-[281px]">
        <NodeCanvas />
        <div className="flex w-[199px] shrink-0 flex-col bg-[#424242]">
          <PanelHeader title="Node" open />
          <div className="flex flex-col bg-[#383838] pt-[9px] pr-2 pb-px pl-[9px]">
            <button type="button" className="flex h-[18px] items-center rounded-[2px] bg-[#585858] pl-[3px]">
              <RefreshIcon />
              <span className="flex-1 pr-1">Reset Node</span>
            </button>
            {[["Name", "ColorRamp"], ["Label", ""]].map(([label, value], i) => (
              <label key={label} className={`flex items-center ${i === 0 ? "mt-[17px]" : "mt-[5px]"}`}>
                <span className="flex-1">{label}:</span>
                <span className="flex h-5 w-[137px] items-center gap-[6px] rounded-[3px] border border-[#404040] bg-[#1d1d1d] pl-[3px]">
                  <NodeIcon />
                  <input defaultValue={value} className="w-0 flex-1 bg-transparent outline-none" />
                </span>
              </label>
            ))}
            <div className="mt-[10px] flex h-5 items-center gap-[6px] pr-5 pl-3">
              <Triangle />
              <Check label="Color" className="flex-1" />
              <ListIcon />
            </div>
          </div>
          <PanelHeader title="Properties" />
        </div>
        <SideTabs
          tabs={[
            { name: "Ite", className: "h-[37px] pb-2", active: true },
            { name: "Too", className: "h-[34px]" },
            { name: "Vie", className: "h-[39px] pb-2" },
            { name: "Option", className: "h-[51px]" },
            { name: "Node Wrangle", className: "h-[88px]" },
          ]}
        />
      </div>
    </section>
  );
}

/* ---------- timeline ---------- */

const frames = Array.from({ length: 25 }, (_, i) => (i + 1) * 10);

const transport = [
  { name: "Jump to start", d: "M2 2v12M13 2v12L4 8z" },
  { name: "Previous keyframe", d: "M0 8l4-5 4 5-4 5zM15 3v10L9 8z" },
  { name: "Play reversed", d: "M13 1v14L2 8z" },
  { name: "Play", d: "M3 1v14L14 8z" },
  { name: "Next keyframe", d: "M1 3v10l6-5zM8 8l4-5 4 5-4 5z" },
  { name: "Jump to end", d: "M3 2v12l9-6zM14 2v12" },
];

function Timeline() {
  return (
    <section className="relative overflow-hidden rounded-[5px] bg-[#353535]" aria-label="Timeline">
      <div className="grid h-[25px] grid-cols-[44%_auto_1fr] items-center bg-[#393939] pr-[7px]">
        <div className="flex items-center pl-[9px]">
          <IconMenu label="Editor type"><ClockIcon /></IconMenu>
          <div className={`ml-[6px] flex h-[19px] overflow-hidden ${dark}`}>
            <button type="button" className="flex w-[68px] items-center justify-between border-r border-[#404040] pr-[3px] pl-[6px]">Playback<Chevron /></button>
            <button type="button" className="flex w-[58px] items-center justify-between pr-[3px] pl-[7px]">Keying<Chevron /></button>
          </div>
          <div className="ml-[10px] flex gap-4">
            <button type="button">View</button>
            <button type="button">Marker</button>
          </div>
        </div>
        <div className="flex items-center gap-[6px] pl-[6px]">
          <div className="flex h-[19px] overflow-hidden rounded-[3px]">
            <button type="button" aria-label="Auto keying" className="flex w-[19px] items-center justify-center bg-[#545454]">
              <span className="size-2 rounded-full bg-[#e0e0e0]" />
            </button>
            <button type="button" aria-label="Auto keying options" className="flex w-5 items-center justify-center bg-[#333] text-[#6a6a6a]"><Chevron /></button>
          </div>
          <div className="flex h-[19px] gap-px overflow-hidden rounded-[3px]">
            {transport.map((item) => (
              <button key={item.name} type="button" aria-label={item.name} className="flex w-[19px] items-center justify-center bg-[#545454] text-[#e6e6e6]">
                <svg viewBox="0 0 16 16" className="size-[13px]" fill="currentColor" stroke="currentColor" aria-hidden="true"><path d={item.d} /></svg>
              </button>
            ))}
          </div>
        </div>
        <div className="ml-auto flex gap-[7px] font-['DejaVu_Sans',sans-serif]">
          <input aria-label="Current frame" defaultValue="1" className="h-[19px] w-[73px] rounded-[3px] bg-[#545454] text-center outline-none" />
          <div className="flex h-[19px] gap-px overflow-hidden rounded-[3px]">
            <button type="button" aria-label="Use preview range" className="flex w-[18px] items-center justify-center bg-[#545454]"><StopwatchIcon /></button>
            <label className="flex w-[87px] items-center bg-[#545454] pr-[13px] pl-[15px]">
              <span className="font-['DejaVu_Sans_Condensed',sans-serif]">Start</span>
              <input defaultValue="1" className="w-0 flex-1 bg-transparent text-right outline-none" />
            </label>
            <label className="flex w-[83px] items-center bg-[#545454] pr-[13px] pl-[15px]">
              <span className="font-['DejaVu_Sans_Condensed',sans-serif]">End</span>
              <input defaultValue="250" className="w-0 flex-1 bg-transparent text-right outline-none" />
            </label>
          </div>
        </div>
      </div>

      <div className="flex h-[23px] items-center bg-[#2a2a2a] pr-[30px] pl-[82px] font-['DejaVu_Sans',sans-serif] text-[#a4a4a4]">
        {frames.map((frame) => (
          <span key={frame} className="flex-1 text-center">{frame}</span>
        ))}
      </div>
      <div className="flex h-[13px] bg-[#333] pr-[30px] pl-[58px]">
        <div className="w-6 bg-[#424242]" />
        {frames.map((frame) => (
          <div key={frame} className="flex flex-1">
            <div className="flex-1 border-l border-[#3a3a3a] bg-[#424242]" />
            <div className={frame === 250 ? "flex-1 border-l border-black bg-[#333]" : "flex-1 border-l border-[#2c2c2c] bg-[#424242]"} />
          </div>
        ))}
      </div>
      <div className="mr-2 mb-px ml-[9px] flex h-[9px] items-center justify-between rounded-full bg-[#666] px-[2px]">
        <span className="size-[6px] rounded-full bg-[#333] ring-1 ring-[#8a8a8a]" />
        <span className="size-[6px] rounded-full bg-[#333] ring-1 ring-[#8a8a8a]" />
      </div>

      {/* playhead */}
      <div className="pointer-events-none absolute top-7 left-[47px] flex w-6 flex-col items-center text-white">
        <span className="w-6 rounded-[3px] bg-[#4f78bc] text-center leading-[17px]">1</span>
        <span className="h-[15px] w-[2px] bg-[#5b86d0]" />
      </div>
      <button type="button" aria-label="Show channels" className="absolute top-[41px] left-0 flex h-[13px] w-2 items-center rounded-r bg-[#333] text-[#999]">
        <Chevron className="size-[7px] -rotate-90" />
      </button>
      <button type="button" aria-label="Show sidebar" className="absolute top-[41px] right-0 flex h-[13px] w-2 items-center rounded-l bg-[#333] text-[#999]">
        <Chevron className="size-[7px] rotate-90" />
      </button>
    </section>
  );
}

/* ---------- outliner ---------- */

const objects = [
  { name: "GPencil", icon: <GPencilIcon className="size-[15px]" />, data: <GPencilDataIcon className="size-[14px]" /> },
  { name: "Plane", icon: <MeshObjectIcon className="size-[15px]" />, data: <MeshDataIcon className="size-[14px]" />, selected: true },
  { name: "Text", icon: "a", data: <CurveDataIcon className="size-[14px]" /> },
  { name: "Text.001", icon: "a", data: <CurveDataIcon className="size-[14px]" /> },
];

function RowToggles() {
  return (
    <span className="flex gap-[3px] text-[#dcdcdc]">
      <button type="button" aria-label="Hide in viewport"><EyeIcon /></button>
      <button type="button" aria-label="Disable in renders"><CameraIcon /></button>
    </span>
  );
}

function Outliner() {
  return (
    <section className="flex flex-col overflow-hidden rounded-[5px] bg-[#282828] text-[#c0c0c0]" aria-label="Outliner">
      <div className="flex h-[26px] items-center bg-[#393939] pr-2 pl-[9px] text-[#dcdcdc]">
        <IconMenu label="Editor type"><OutlinerIcon /></IconMenu>
        <span className="w-[6px]" />
        <IconMenu label="Display mode"><LayersIcon /></IconMenu>
        <label className="mr-auto ml-[23px] flex h-[19px] w-[110px] items-center rounded-[3px] border border-[#404040] bg-[#1d1d1d] pl-[3px]">
          <SearchIcon />
          <input aria-label="Search outliner" className="w-0 flex-1 bg-transparent outline-none" />
        </label>
        <IconMenu label="Filter" className="mr-[6px] w-8"><FilterIcon /></IconMenu>
        <button type="button" aria-label="New collection" className="flex size-[19px] items-center justify-center rounded-[3px] bg-[#4b4b4b]"><NewCollectionIcon /></button>
      </div>
      <ul className="flex h-[284px] flex-col bg-[repeating-linear-gradient(#282828_0_20px,#2c2c2c_20px_40px)]">
        <li className="flex h-5 items-center gap-[6px] pt-px pl-[23px]">
          <CollectionIcon className="size-4" />
          Scene Collection
        </li>
        <li className="flex h-5 items-center pt-px pr-[9px] pl-[25px]">
          <Triangle open />
          <span className="mr-[6px] ml-[7px] flex size-[18px] items-center justify-center rounded-[4px] bg-[#4a4a4a] text-[#dcdcdc] ring-1 ring-[#6a6a6a]">
            <CollectionIcon className="size-4" />
          </span>
          Collection
          <Check label="" checked className="mr-[3px] ml-auto gap-0 pr-1 [&_input]:checked:bg-[#e0e0e0] [&_svg]:stroke-[#222]" box="size-[11px]" />
          <RowToggles />
        </li>
        {objects.map((item) => (
          <li key={item.name} className={`flex h-5 items-center pt-px pr-[9px] ${item.selected ? "bg-[#3b5689]" : ""}`}>
            <span className={`ml-[30px] h-5 w-4 border-l ${item.selected ? "border-transparent" : "border-[#5a5a5a]"}`} />
            <Triangle />
            <span
              className={`mr-[5px] ml-2 flex size-[18px] items-center justify-center rounded-[4px] font-['DejaVu_Serif',serif] text-[16px] leading-4 font-bold text-[#cc8549] ${
                item.selected ? "bg-[#7383a3]" : "pb-[2px]"
              }`}
            >
              {item.icon}
            </span>
            <span className={item.selected ? "text-[#ffab33]" : ""}>{item.name}</span>
            <span className="mr-auto ml-6 text-[#00bf8c]">{item.data}</span>
            <RowToggles />
          </li>
        ))}
      </ul>
    </section>
  );
}

/* ---------- properties editor ---------- */

const propertyTabs = [
  { name: "Tool", icon: <ToolIcon />, className: "mb-2 text-[#c8c8c8]" },
  { name: "Render", icon: <RenderIcon />, className: "text-[#c8c8c8]" },
  { name: "Output", icon: <OutputIcon />, className: "text-[#c8c8c8]" },
  { name: "View Layer", icon: <LayersIcon />, className: "text-[#c8c8c8]" },
  { name: "Scene", icon: <SceneIcon />, className: "text-[#c8c8c8]" },
  { name: "World", icon: <WorldIcon />, className: "mb-2 text-[#cc6670]" },
  { name: "Object", icon: <ObjectIcon />, className: "text-[#cc8549]" },
  { name: "Modifiers", icon: <WrenchIcon />, className: "text-[#6a96d8]" },
  { name: "Particles", icon: <ParticlesIcon />, className: "text-[#6a96d8]" },
  { name: "Physics", icon: <PhysicsIcon />, className: "text-[#6a96d8]" },
  { name: "Constraints", icon: <ConstraintIcon />, className: "text-[#6a96d8]" },
  { name: "Object Data", icon: <MeshDataIcon />, className: "text-[#00d6a3]", active: true },
  { name: "Material", icon: <MaterialIcon />, className: "mb-2 text-[#cc6670]" },
  { name: "Texture", icon: <TextureIcon />, className: "text-[#cc6670]" },
];

function ListPanel({ title }: { title: string }) {
  return (
    <>
      <PanelHeader title={title} open dim />
      <div className="flex h-24 gap-[10px] bg-[#393939] pt-2 pr-2 pl-[9px]">
        <div className="flex h-[79px] flex-1 items-end rounded-[4px] border border-[#454545] bg-[#2d2d2d] pb-[6px] pl-[10px]">
          <Triangle />
          <Grip className="mx-auto" />
        </div>
        <div className="flex w-[19px] flex-col">
          <button type="button" aria-label={`Add to ${title}`} className="flex h-[19px] items-center justify-center rounded-t-[3px] bg-[#545454] text-white">
            <svg viewBox="0 0 10 10" className="size-[10px]" stroke="currentColor"><path d="M5 .5v9M.5 5h9" /></svg>
          </button>
          <button type="button" aria-label={`Remove from ${title}`} className="mt-px flex h-[18px] items-center justify-center rounded-b-[3px] bg-[#4b4b4b] text-[#8a8a8a]">
            <svg viewBox="0 0 10 10" className="size-[10px]" stroke="currentColor"><path d="M.5 5h9" /></svg>
          </button>
          <button type="button" aria-label={`${title} specials`} className={`mt-2 flex h-[19px] items-center justify-center ${dark}`}>
            <Chevron className="size-[9px]" />
          </button>
        </div>
      </div>
    </>
  );
}

function Properties() {
  return (
    <section className="flex flex-1 flex-col overflow-hidden rounded-[5px] bg-[#232323]" aria-label="Properties">
      <div className="flex h-[25px] items-center bg-[#393939] pr-2 pl-[9px]">
        <IconMenu label="Editor type"><PropertiesIcon /></IconMenu>
        <label className="mr-auto ml-[72px] flex h-[19px] w-[110px] items-center rounded-[3px] border border-[#404040] bg-[#1d1d1d] pl-[3px]">
          <SearchIcon />
          <input aria-label="Search properties" className="w-0 flex-1 bg-transparent outline-none" />
        </label>
        <button type="button" aria-label="Options" className={`flex size-[19px] items-center justify-center ${dark}`}><Chevron /></button>
      </div>
      <div className="flex flex-1">
        <div className="flex w-7 shrink-0 flex-col gap-[2px] pt-[9px] pl-[2px]" role="tablist" aria-orientation="vertical">
          {propertyTabs.map((tab) => (
            <button
              key={tab.name}
              type="button"
              role="tab"
              aria-label={tab.name}
              aria-selected={!!tab.active}
              className={`flex h-[26px] items-center justify-center rounded-l-[4px] ${tab.active ? "bg-[#424242]" : "bg-[#2c2c2c]"} ${tab.className}`}
            >
              {tab.icon}
            </button>
          ))}
        </div>
        <div className="flex min-w-0 flex-1 flex-col bg-[#424242]">
          <div className="flex h-9 items-center pr-[9px] pl-[10px]">
            <ObjectIcon className="size-[15px]" />
            <span className="ml-[9px]">Plane</span>
            <span className="mx-[13px] text-[#2b2b2b]">›</span>
            <MeshDataIcon />
            <span className="ml-2 flex-1">Plane</span>
            <button type="button" aria-label="Pin" className="text-[#909090]"><PinIcon /></button>
          </div>
          <div className="mt-2 mr-2 mb-2 ml-[9px]">
            <IdBlock label="Mesh" value="Plane" icon={<MeshDataIcon />} className="flex-1">
              <button type="button" aria-label="Fake user" className={`${idButton} text-[#9a9a9a]`}><ShieldIcon /></button>
            </IdBlock>
          </div>
          <ListPanel title="Vertex Groups" />
          <ListPanel title="Shape Keys" />
          {["UV Maps", "Vertex Colors", "Face Maps", "Normals", "Texture Space", "Remesh", "Geometry Data", "Custom Properties"].map((title) => (
            <PanelHeader key={title} title={title} dim />
          ))}
        </div>
      </div>
    </section>
  );
}

function StatusBar() {
  return (
    <footer className="flex h-[22px] items-center border-t-2 border-[#1e1e1e] bg-[#303030] pr-[9px] pl-[10px] text-[#a6a6a6]">
      <div className="flex w-[66px] items-center gap-[6px]"><MouseIcon side="left" />Select</div>
      <div className="flex w-[171px] items-center gap-[6px]"><MouseIcon side="left" drag />Box Select</div>
      <div className="flex w-[235px] items-center gap-[6px]"><MouseIcon side="middle" />Zoom 2D View</div>
      <div className="flex items-center gap-[6px]"><MouseIcon side="right" drag />Cut Links</div>
      <span className="ml-auto">2.93.0 Alpha</span>
    </footer>
  );
}

export default function App() {
  return (
    <div className="flex min-h-screen flex-col bg-[#1e1e1e] font-['DejaVu_Sans_Condensed','DejaVu_Sans',sans-serif] text-[11px] leading-[14px] text-[#dcdcdc]">
      <TitleBar />
      <TopBar />
      <main className="flex flex-1 gap-[3px] pr-px">
        <div className="flex min-w-0 flex-1 flex-col">
          <Viewport />
          <div className="h-[3px]" />
          <ShaderEditor />
          <div className="h-1" />
          <Timeline />
        </div>
        <aside className="flex w-[331px] shrink-0 flex-col gap-[3px]">
          <Outliner />
          <Properties />
        </aside>
      </main>
      <StatusBar />
    </div>
  );
}
